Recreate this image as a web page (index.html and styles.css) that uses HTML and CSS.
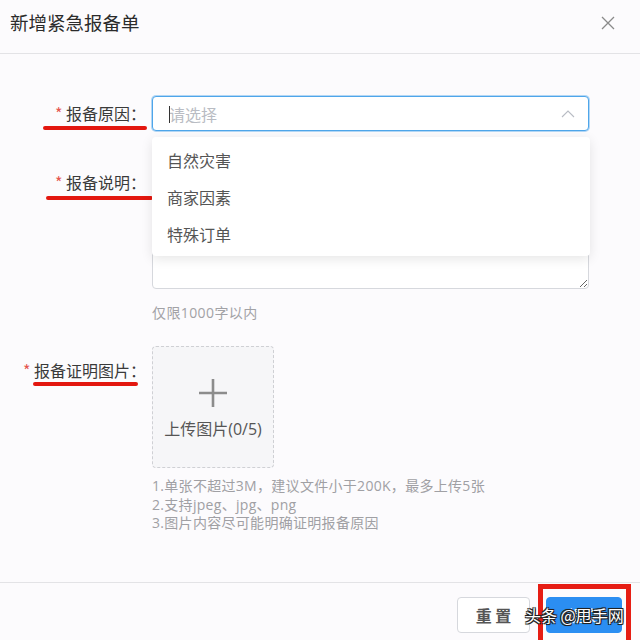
FILE: index.html
```html
<!DOCTYPE html>
<html lang="zh-CN">
<head>
<meta charset="utf-8">
<title>新增紧急报备单</title>
<link rel="stylesheet" href="styles.css">
</head>
<body>
<div class="page">
  <div class="header">
    <div class="title">新增紧急报备单</div>
    <svg class="close" width="14" height="14" viewBox="0 0 14 14"><path d="M1 1L13 13M13 1L1 13" stroke="#8a8a8a" stroke-width="1.3" fill="none"/></svg>
  </div>
  <div class="form">
    <div class="item item-select">
      <div class="label"><span class="star">*</span> 报备原因：<span class="mark mark1"></span></div>
      <div class="control">
        <div class="select">
          <span class="caret"></span>
          <span class="placeholder">请选择</span>
          <svg class="arrow" width="14" height="10" viewBox="0 0 14 10"><path d="M1 8L7 2L13 8" stroke="#b8bcc4" stroke-width="1.1" fill="none"/></svg>
        </div>
        <div class="dropdown">
          <div class="option">自然灾害</div>
          <div class="option">商家因素</div>
          <div class="option">特殊订单</div>
        </div>
      </div>
    </div>
    <div class="item item-text">
      <div class="label"><span class="star">*</span> 报备说明：<span class="mark mark2"></span></div>
      <div class="control">
        <textarea class="textarea"></textarea>
        <div class="tip">仅限1000字以内</div>
      </div>
    </div>
    <div class="item item-upload">
      <div class="label label-upload"><span class="star">*</span> 报备证明图片：<span class="mark mark3"></span></div>
      <div class="control">
        <div class="upload">
          <svg class="plus" width="28" height="28" viewBox="0 0 28 28"><path d="M14 0V28M0 14H28" stroke="#8c8c8c" stroke-width="2.6" fill="none"/></svg>
          <div class="upload-text">上传图片(0/5)</div>
        </div>
        <div class="hints">
          <div>1.单张不超过3M，建议文件小于200K，最多上传5张</div>
          <div>2.支持jpeg、jpg、png</div>
          <div>3.图片内容尽可能明确证明报备原因</div>
        </div>
      </div>
    </div>
  </div>
  <div class="footer">
    <button class="btn btn-reset">重 置</button>
    <button class="btn btn-submit">提交<span class="redbox"></span></button>
    <span class="watermark">头条 @甩手网</span>
  </div>
</div>
</body>
</html>
```
FILE: styles.css
```css
* { box-sizing: border-box; }
html, body { margin: 0; padding: 0; }
body {
  width: 640px;
  height: 640px;
  overflow: hidden;
  background: #fcfbfd;
  font-family: "Noto Sans CJK SC", "Noto Sans", sans-serif;
  color: #333;
}
.page {
  height: 640px;
  display: flex;
  flex-direction: column;
  position: relative;
}
.header {
  height: 54px;
  border-bottom: 1px solid #e3e3e6;
  display: flex;
  justify-content: space-between;
  align-items: flex-start;
  padding: 9px 25px 0 10px;
  flex: none;
}
.title {
  font-size: 18.5px;
  line-height: 26px;
  color: #2b2b2b;
}
.close { margin-top: 7px; }
.form {
  flex: 1;
  padding-top: 42px;
}
.item {
  display: grid;
  grid-template-columns: 152px 437px;
}
.label {
  position: relative;
  text-align: right;
  padding-right: 6px;
  font-size: 16px;
  line-height: 35px;
  color: #3a3a3a;
  white-space: nowrap;
}
.star { color: #e5554f; }
.mark {
  position: absolute;
  height: 4px;
  border-radius: 2px;
  background: #e3170f;
}
.mark1 { left: 43px; width: 104px; top: 30px; }
.mark2 { left: 46px; width: 107px; top: 31px; }
.mark3 { left: 33px; width: 105px; top: 36px; }
.control { position: relative; }
.item-select { margin-bottom: 34px; }
.select {
  height: 35px;
  border: 1px solid #4fa6ea;
  box-shadow: 0 0 0 1px rgba(90, 170, 235, 0.45);
  border-radius: 4px;
  background: #fff;
  display: flex;
  align-items: center;
  padding-left: 16px;
  position: relative;
}
.caret {
  position: absolute;
  left: 16px;
  top: 9px;
  width: 1px;
  height: 17px;
  background: #333;
}
.placeholder {
  font-size: 16px;
  color: #b9bcc3;
}
.arrow {
  position: absolute;
  right: 13px;
  top: 12px;
}
.dropdown {
  position: absolute;
  left: 0;
  top: 41px;
  width: 438px;
  background: #fff;
  border-radius: 4px;
  box-shadow: 0 3px 12px rgba(0, 0, 0, 0.1);
  padding: 5px 0 3px;
  z-index: 5;
}
.option {
  height: 37px;
  line-height: 37px;
  padding-left: 15px;
  font-size: 16px;
  color: #555;
}
.textarea {
  display: block;
  width: 437px;
  height: 124px;
  border: 1px solid #d6d8dd;
  border-radius: 4px;
  background: #fff;
  resize: vertical;
  margin: 0;
  font-family: inherit;
}
.tip {
  margin-top: 14px;
  font-family: "Open Sans", "Noto Sans CJK SC", sans-serif;
  font-size: 14px;
  letter-spacing: 0.4px;
  line-height: 20px;
  color: #a2a2a6;
}
.item-text { margin-bottom: 23px; }
.label-upload { padding-top: 6px; line-height: 36px; }
.upload {
  width: 122px;
  height: 122px;
  border: 1px dashed #cfd0d4;
  border-radius: 4px;
  background: #f6f6f8;
  display: flex;
  flex-direction: column;
  align-items: center;
  padding-top: 32px;
}
.upload-text {
  margin-top: 11px;
  font-family: "Open Sans", "Noto Sans CJK SC", sans-serif;
  font-size: 16px;
  line-height: 22px;
  color: #555;
}
.hints {
  margin-top: 9px;
  font-family: "Open Sans", "Noto Sans CJK SC", sans-serif;
  font-size: 14px;
  letter-spacing: 0.3px;
  line-height: 18.5px;
  color: #a0a0a4;
}
.footer {
  flex: none;
  height: 58px;
  border-top: 1px solid #e3e3e6;
  display: flex;
  justify-content: flex-end;
  align-items: flex-start;
  padding: 14px 18px 0 0;
  gap: 16px;
  position: relative;
}
.btn {
  height: 36px;
  border-radius: 4px;
  font-family: inherit;
  font-size: 16px;
  margin: 0;
  padding: 0;
  position: relative;
}
.btn-reset {
  width: 73px;
  background: #fff;
  border: 1px solid #d6d8dd;
  color: #555;
  font-weight: bold;
}
.btn-submit {
  width: 76px;
  background: #2b8ef2;
  border: 1px solid #2b8ef2;
  color: #fff;
}
.redbox {
  position: absolute;
  left: -9px;
  top: -14px;
  width: 93px;
  height: 62px;
  border: 5px solid #e61d14;
}
.watermark {
  position: absolute;
  left: 525px;
  top: 21px;
  font-size: 16px;
  line-height: 22px;
  color: #fff;
  text-shadow: -1px -1px 0 #222, 1px -1px 0 #222, -1px 1px 0 #222, 1px 1px 0 #222, 0 0 2px #000;
  white-space: nowrap;
}
```
